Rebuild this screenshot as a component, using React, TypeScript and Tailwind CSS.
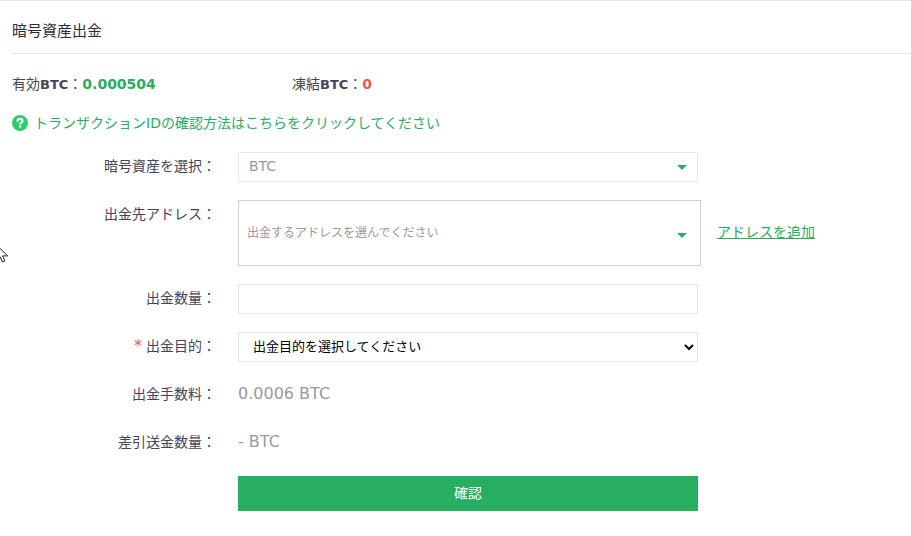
import type { ReactNode } from "react";

function Row({ label, htmlFor, required, children }: {
  label: string;
  htmlFor: string;
  required?: boolean;
  children: ReactNode;
}) {
  return (
    <div className="flex items-start">
      <label htmlFor={htmlFor} className="w-[204px] shrink-0 text-right leading-7 whitespace-nowrap">
        {required && <span className="mr-1 text-base leading-none text-[#f5554a]">*</span>}
        {label}：
      </label>
      <div className="ml-[22px] flex min-w-0 grow items-center gap-4">{children}</div>
    </div>
  );
}

function Caret() {
  return (
    <svg viewBox="0 0 10 5" aria-hidden="true" className="h-[5px] w-[10px]">
      <path d="M0 0h10L5 5z" fill="#27ae60" />
    </svg>
  );
}

function Pointer() {
  return (
    <svg viewBox="0 0 12 19" aria-hidden="true" className="pointer-events-none absolute top-[243px] -left-[4px] h-[19px] w-[12px]">
      <path d="M.5 1v15.2l3.6-3.4 2.4 5.2 2.4-1.1-2.3-5h5z" fill="#fff" stroke="#1c1c2c" strokeWidth="1" />
    </svg>
  );
}

export default function App() {
  return (
    <main className="relative overflow-hidden border-t border-[#e4e4e4] bg-white pl-3 font-['DejaVu_Sans','Noto_Sans_CJK_JP',sans-serif] text-sm text-[#454556]">
      <h1 className="border-b border-[#e6e6e6] pt-5 pb-3 text-[15px] leading-5 text-[#2b2b3a]">暗号資産出金</h1>

      <div className="mt-5 flex leading-5">
        <p className="w-[280px]">
          有効<span className="text-[13px] font-bold">BTC</span>：
          <strong className="text-[#27ae60]">0.000504</strong>
        </p>
        <p>
          凍結<span className="text-[13px] font-bold">BTC</span>：
          <strong className="text-[#f5554a]">0</strong>
        </p>
      </div>

      <a href="#guide" className="mt-[18px] flex items-center gap-[6px] leading-5 text-[#27ae60]">
        <svg viewBox="0 0 16 16" aria-hidden="true" className="h-4 w-4">
          <circle cx="8" cy="8" r="8" fill="#2ecc71" />
          <path d="M5.4 6.4c0-1.7 1.1-2.5 2.6-2.5s2.5.8 2.5 2.1c0 1.8-2.4 1.6-2.4 3.3" fill="none" stroke="#fff" strokeWidth="2.1" />
          <path d="M7 10.4h2.2v2.1H7z" fill="#fff" />
        </svg>
        トランザクションIDの確認方法はこちらをクリックしてください
      </a>

      <form className="mt-[19px] flex flex-col gap-[18px] pb-6" onSubmit={(e) => e.preventDefault()}>
        <Row label="暗号資産を選択" htmlFor="asset">
          <div className="relative w-full max-w-[460px]">
            <select id="asset" className="block h-[30px] w-full appearance-none border border-[#e8e8e8] bg-white px-[10px] pb-[2px] text-[#999]">
              <option>BTC</option>
            </select>
            <span className="pointer-events-none absolute inset-y-0 right-[11px] flex items-center">
              <Caret />
            </span>
          </div>
        </Row>

        <Row label="出金先アドレス" htmlFor="address">
          <div className="relative w-full max-w-[463px]">
            <select id="address" className="block h-[66px] w-full appearance-none border border-[#d0d0d0] bg-white px-2 text-xs text-[#999]">
              <option>出金するアドレスを選んでください</option>
            </select>
            <span className="pointer-events-none absolute inset-y-0 right-[14px] flex items-center pt-1">
              <Caret />
            </span>
          </div>
          <a href="#add-address" className="pb-[2px] whitespace-nowrap text-[#27ae60] underline">アドレスを追加</a>
        </Row>

        <Row label="出金数量" htmlFor="amount">
          <input id="amount" type="text" className="h-[30px] w-full max-w-[460px] border border-[#e8e8e8] px-[10px]" />
        </Row>

        <Row label="出金目的" htmlFor="purpose" required>
          <select id="purpose" className="h-[30px] w-full max-w-[460px] border border-[#e8e8e8] bg-white pb-[2px] pl-[10px] text-[13px] text-black">
            <option>出金目的を選択してください</option>
          </select>
        </Row>

        <Row label="出金手数料" htmlFor="fee">
          <output id="fee" className="h-[30px] text-base leading-7 text-[#999]">0.0006 BTC</output>
        </Row>

        <Row label="差引送金数量" htmlFor="net">
          <output id="net" className="h-[30px] text-base leading-7 text-[#999]">- BTC</output>
        </Row>

        <div className="pl-[226px]">
          <button type="submit" className="h-[35px] w-full max-w-[460px] bg-[#27ae60] pb-[2px] text-white">確認</button>
        </div>
      </form>

      <Pointer />
    </main>
  );
}
